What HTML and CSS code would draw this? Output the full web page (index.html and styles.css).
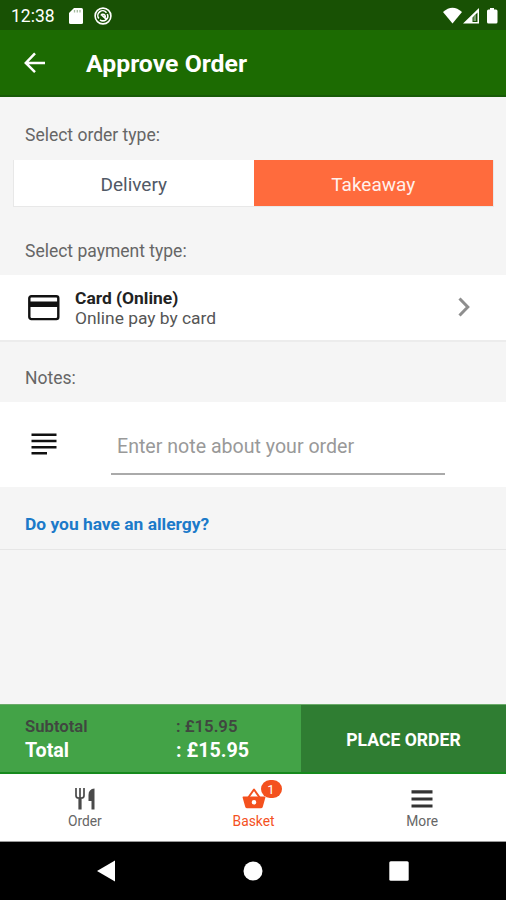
FILE: index.html
```html
<!DOCTYPE html>
<html lang="en">
<head>
<meta charset="utf-8">
<title>Approve Order</title>
<link rel="stylesheet" href="styles.css">
</head>
<body>
<div class="screen">
  <div class="status">
    <span class="clock">12:38</span>
    <svg class="sd" width="14" height="16" viewBox="0 0 14 16"><path fill="#fff" d="M5 0h7.500q1.500 0 1.500 1.500v13q0 1.500-1.500 1.500h-11Q0 16 0 14.500V5z"/><path stroke="#a5ba9e" stroke-width="1.300" d="M5.500 2v2.500M8.300 2v2.500M11 2v2.500"/></svg>
    <svg class="sync" width="18" height="18" viewBox="0 0 18 18" fill="none" stroke="#fff"><circle cx="9" cy="9" r="7.900" stroke-width="1.600"/><path stroke-width="1.600" d="M4.800 11.500A4.800 4.800 0 0 1 12.500 5.700M13.300 7A4.800 4.800 0 0 1 6 12.800M7 7.300l6 5.500M7 8.500a2.200 2.200 0 0 1 4 2"/></svg>
    <svg class="signals" width="56" height="18" viewBox="0 0 56 18" fill="#fff"><path d="M0 5Q9.500-3.500 19 5L9.500 16.500z"/><path fill-rule="evenodd" d="M36 1v15.500H20zM34.500 5.500l-5 5V15h5z"/><path d="M30.500 10l2.500-2.500V14h-2.500z" fill="#799b6e"/><path d="M47 1h4v1.500h2q1.500 0 1.500 1.500v11q0 1.500-1.500 1.500h-7.500Q44 16.500 44 15V4q0-1.500 1.500-1.500H47z"/></svg>
  </div>
  <header class="appbar">
    <svg width="22" height="22" viewBox="0 0 22 22" fill="none" stroke="#fff" stroke-width="2.500"><path d="M11 1.300L1.800 11l9.200 9.200M2 11h19"/></svg>
    <h1 class="title">Approve Order</h1>
  </header>
  <main class="content">
    <div class="label label-type">Select order type:</div>
    <div class="segments">
      <div class="segment"><span class="delivery">Delivery</span></div>
      <div class="segment active"><span class="takeaway">Takeaway</span></div>
    </div>
    <div class="label label-payment">Select payment type:</div>
    <div class="payment">
      <svg class="card" width="32" height="26" viewBox="0 0 32 26"><rect x="1.300" y="1.300" width="29" height="22.800" rx="2" fill="none" stroke="#111" stroke-width="2.400"/><path fill="#111" d="M1 6.500h30v5.500H1z"/></svg>
      <div class="payment-text"><b class="method">Card (Online)</b><span class="detail">Online pay by card</span></div>
      <svg class="chevron" width="12" height="20" viewBox="0 0 12 20" fill="none" stroke="#8e8e8e" stroke-width="3"><path d="M1.500 1.500L9.800 10l-8.300 8.500"/></svg>
    </div>
    <div class="label label-notes">Notes:</div>
    <div class="notes">
      <svg class="lines" width="26" height="23" viewBox="0 0 26 23" stroke="#111" stroke-width="2.600"><path d="M.5 1.800h25M.5 8h25M.5 14.200h25M.5 20.300h15.500"/></svg>
      <div class="field"><span class="placeholder">Enter note about your order</span></div>
    </div>
    <div class="allergy"><span class="allergy-link">Do you have an allergy?</span></div>
  </main>
  <footer class="summary">
    <div class="totals">
      <span class="sub">Subtotal</span><span class="sub sub-price">: £15.95</span>
      <span class="total">Total</span><span class="total total-price">: £15.95</span>
    </div>
    <div class="place"><span class="place-text">PLACE ORDER</span></div>
  </footer>
  <nav class="tabs">
    <div class="tab">
      <svg width="24" height="24" viewBox="0 0 24 24"><path fill="none" stroke="#4a4a4a" stroke-width="1.700" d="M3 1v7.500Q3 11 5.500 11h3Q11 11 11 8.500V1M7 1v10"/><path fill="#4a4a4a" d="M5.400 10.500h3.200v12H5.400zM21.500 1.500v21h-3v-8.500H15.500V8q0-6 6-6.500z"/></svg>
      <span class="t-order">Order</span>
    </div>
    <div class="tab current">
      <span class="basket">
        <svg width="24" height="24" viewBox="0 0 24 24"><path fill="none" stroke="#f4511e" stroke-width="2" stroke-linejoin="round" d="M6 11l6-8.500 6 8.500"/><path fill="#f4511e" fill-rule="evenodd" d="M1.300 9.500h21.400q.9 0 .7 1l-2.600 9.300q-.4 1.500-2 1.500H5.200q-1.600 0-2-1.500L.6 10.500q-.2-1 .7-1zM12 13a2.300 2.300 0 1 0 0 4.600 2.300 2.300 0 0 0 0-4.600z"/></svg>
        <span class="badge">1</span>
      </span>
      <span class="t-basket">Basket</span>
    </div>
    <div class="tab">
      <svg width="24" height="24" viewBox="0 0 24 24" stroke="#333" stroke-width="3.200"><path d="M1.500 4.800h21M1.500 12h21M1.500 19h21"/></svg>
      <span class="t-more">More</span>
    </div>
  </nav>
  <div class="system">
    <svg width="20" height="22" viewBox="0 0 20 22"><path fill="#fff" d="M19 .5v21L1 11z"/></svg>
    <svg width="20" height="20" viewBox="0 0 20 20"><circle cx="10" cy="10" r="9.500" fill="#fff"/></svg>
    <svg width="20" height="20" viewBox="0 0 20 20"><rect x=".3" y=".3" width="19.400" height="19.400" rx="1.500" fill="#fff"/></svg>
  </div>
</div>
</body>
</html>
```
FILE: styles.css
```css
* { box-sizing: border-box; }
body { margin: 0; font-family: Roboto, "Liberation Sans", sans-serif; background: #f5f5f5; }
svg { display: block; flex: none; }
span, b { white-space: nowrap; }
.screen { width: 506px; height: 900px; display: flex; flex-direction: column; overflow: hidden; }
.status { height: 30px; flex: none; display: flex; align-items: center; background: #185104; padding: 1px 7px 0 11px; color: #fff; }
.clock { width: 58px; font-size: 17.5px; }
.sync { margin-left: 11px; }
.signals { margin-left: auto; }
.appbar { height: 67px; flex: none; display: flex; align-items: center; gap: 40px; padding-left: 24px; background: #1c6b02; border-bottom: 2px solid #185b08; color: #fff; }
.title { margin: 0; font-size: 24.8px; font-weight: 700; line-height: 30px; padding-top: 2px; white-space: nowrap; }
.content { flex: 1; min-height: 0; }
.label { padding-left: 25px; color: #666; font-size: 17.5px; line-height: 22px; }
.label-type { height: 63px; padding-top: 27px; }
.label-payment { height: 68px; padding-top: 33px; }
.label-notes { height: 60px; padding-top: 25px; }
.segments { height: 47px; margin: 0 12px 0 13px; display: flex; border: 1px solid #e8e8e8; border-top: 0; }
.segment { flex: 1; display: flex; align-items: center; justify-content: center; padding-top: 2px; background: #fff; color: #515966; font-size: 19px; }
.active { background: #ff6b3d; color: #fff1ec; }
.payment { height: 67px; display: flex; align-items: center; padding-left: 28px; background: #fff; border-bottom: 2px solid #ececec; }
.payment-text { display: flex; flex-direction: column; margin-left: 15px; font-size: 17.4px; line-height: 20px; color: #555; }
.method { color: #222; }
.chevron { margin: 0 36px 2px auto; }
.notes { height: 85px; display: flex; align-items: center; padding-left: 31px; background: #fff; }
.field { width: 334px; height: 60px; margin-left: 54px; padding: 20px 0 0 6px; border-bottom: 2px solid #aaa; color: #999; font-size: 19.6px; line-height: 24px; }
.allergy { height: 63px; padding: 26px 0 0 25px; border-bottom: 1px solid #e6e6e6; color: #1c7ac9; font-size: 17.4px; font-weight: 700; line-height: 22px; }
.summary { height: 70px; flex: none; display: flex; border-top: 1px solid #6bab6a; border-bottom: 2px solid #168a1d; background: #43a347; }
.totals { width: 301px; display: grid; grid-template-columns: 151px 1fr; grid-template-rows: 22px 26px; align-content: start; align-items: center; padding: 11px 0 0 25px; }
.sub { color: #404640; font-size: 16.7px; font-weight: 600; line-height: 22px; }
.total { color: #fff; font-size: 19.7px; font-weight: 700; line-height: 24px; }
.place { flex: 1; display: flex; align-items: center; justify-content: center; padding-top: 3px; background: #2f7d32; color: #fff; font-size: 17.6px; font-weight: 700; }
.tabs { height: 68px; flex: none; display: flex; background: #fff; border-bottom: 1px solid #999; }
.tab { flex: 1; display: flex; flex-direction: column; align-items: center; padding: 13px 0 0 1px; color: #666; font-size: 13.8px; line-height: 20px; }
.current { color: #f4511e; }
.basket { position: relative; }
.badge { position: absolute; left: 19px; top: -7px; width: 21px; height: 18px; border-radius: 9px; background: #f4511e; color: #fff; font-size: 13px; line-height: 19px; text-align: center; }
.system { height: 58px; flex: none; display: flex; align-items: center; justify-content: space-between; padding: 0 97px 0 96px; background: #000; }
```
